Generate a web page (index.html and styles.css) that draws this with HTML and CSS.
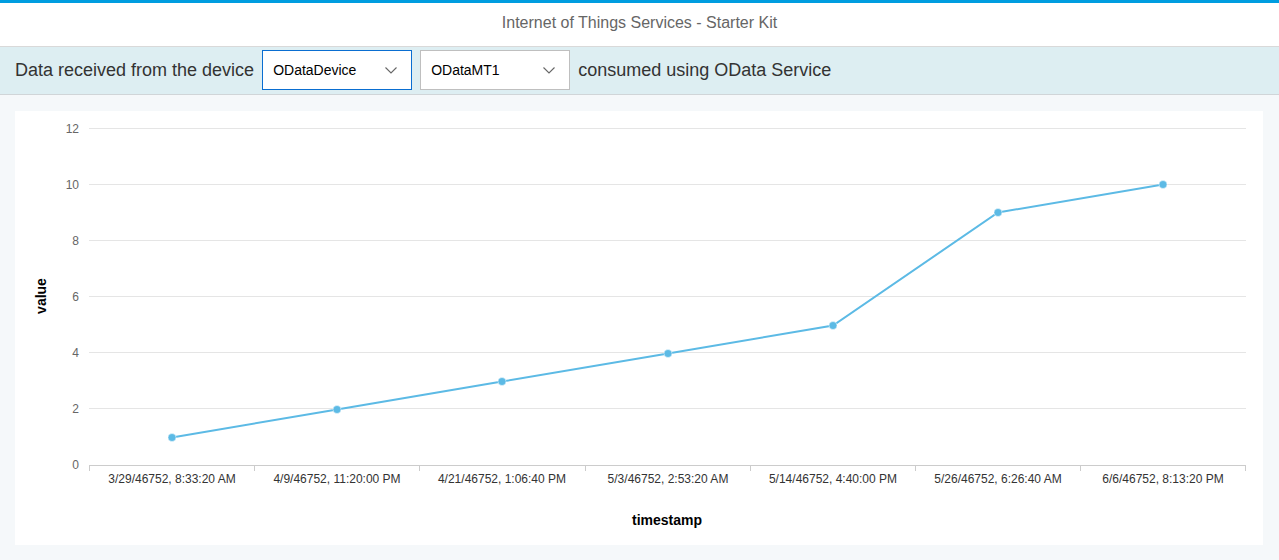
FILE: index.html
```html
<!DOCTYPE html>
<html>
<head>
<meta charset="utf-8">
<link rel="stylesheet" href="styles.css">
</head>
<body>
<div class="page">
  <header class="shell-header">
    <div class="title">Internet of Things Services - Starter Kit</div>
  </header>
  <div class="toolbar">
    <span class="label">Data received from the device</span>
    <div class="select select-active">
      <span class="select-text">ODataDevice</span>
      <svg class="chev" width="12" height="7" viewBox="0 0 12 7"><path d="M0.5 0.5 L6 6 L11.5 0.5" fill="none" stroke="#666" stroke-width="1.1"/></svg>
    </div>
    <div class="select">
      <span class="select-text">ODataMT1</span>
      <svg class="chev" width="12" height="7" viewBox="0 0 12 7"><path d="M0.5 0.5 L6 6 L11.5 0.5" fill="none" stroke="#666" stroke-width="1.1"/></svg>
    </div>
    <span class="label">consumed using OData Service</span>
  </div>
  <main class="content">
    <section class="card">
      <svg class="chart" width="1248" height="434" viewBox="0 0 1248 434">
        <g class="grid" stroke="#e5e5e5" stroke-width="1">
          <line x1="74" x2="1231" y1="17.5" y2="17.5"/>
          <line x1="74" x2="1231" y1="73.5" y2="73.5"/>
          <line x1="74" x2="1231" y1="129.5" y2="129.5"/>
          <line x1="74" x2="1231" y1="185.5" y2="185.5"/>
          <line x1="74" x2="1231" y1="241.5" y2="241.5"/>
          <line x1="74" x2="1231" y1="297.5" y2="297.5"/>
        </g>
        <g class="ylab" fill="#666" font-size="12" text-anchor="end">
          <text x="64" y="22">12</text>
          <text x="64" y="78">10</text>
          <text x="64" y="134">8</text>
          <text x="64" y="190">6</text>
          <text x="64" y="246">4</text>
          <text x="64" y="302">2</text>
          <text x="64" y="358">0</text>
        </g>
        <g stroke="#cccccc" stroke-width="1">
          <line x1="74" x2="1231" y1="354.5" y2="354.5"/>
          <line x1="74.5" x2="74.5" y1="354" y2="360"/>
          <line x1="239.5" x2="239.5" y1="354" y2="360"/>
          <line x1="404.5" x2="404.5" y1="354" y2="360"/>
          <line x1="570.5" x2="570.5" y1="354" y2="360"/>
          <line x1="735.5" x2="735.5" y1="354" y2="360"/>
          <line x1="900.5" x2="900.5" y1="354" y2="360"/>
          <line x1="1065.5" x2="1065.5" y1="354" y2="360"/>
          <line x1="1230.5" x2="1230.5" y1="354" y2="360"/>
        </g>
        <g class="xlab" fill="#333" font-size="12" text-anchor="middle">
          <text x="157" y="372">3/29/46752, 8:33:20 AM</text>
          <text x="322" y="372">4/9/46752, 11:20:00 PM</text>
          <text x="487" y="372">4/21/46752, 1:06:40 PM</text>
          <text x="653" y="372">5/3/46752, 2:53:20 AM</text>
          <text x="818" y="372">5/14/46752, 4:40:00 PM</text>
          <text x="983" y="372">5/26/46752, 6:26:40 AM</text>
          <text x="1148" y="372">6/6/46752, 8:13:20 PM</text>
        </g>
        <text class="axis-title" x="652" y="414" text-anchor="middle">timestamp</text>
        <text class="axis-title" x="0" y="0" text-anchor="middle" transform="translate(31 185) rotate(-90)">value</text>
        <polyline fill="none" stroke="#5cbae5" stroke-width="2" points="157,326.5 322,298.5 487,270.5 653,242.5 818,214.5 983,101.5 1148,73.5"/>
        <g fill="#5cbae5" stroke="#fff" stroke-width="0.5">
          <circle cx="157" cy="326.5" r="4"/>
          <circle cx="322" cy="298.5" r="4"/>
          <circle cx="487" cy="270.5" r="4"/>
          <circle cx="653" cy="242.5" r="4"/>
          <circle cx="818" cy="214.5" r="4"/>
          <circle cx="983" cy="101.5" r="4"/>
          <circle cx="1148" cy="73.5" r="4"/>
        </g>
      </svg>
    </section>
  </main>
</div>
</body>
</html>
```
FILE: styles.css
```css
html, body {
  margin: 0;
  padding: 0;
}
body {
  font-family: "Liberation Sans", Arial, sans-serif;
  background: #f5f8fa;
  width: 1279px;
  height: 560px;
  overflow: hidden;
}
.page {
  display: flex;
  flex-direction: column;
  height: 560px;
}
.shell-header {
  border-top: 3px solid #009de0;
  background: #ffffff;
  height: 43px;
  border-bottom: 1px solid #d9d9d9;
  display: flex;
  align-items: center;
  justify-content: center;
}
.title {
  font-size: 16px;
  color: #666666;
  margin-top: -4px;
}
.toolbar {
  background: #ddeef2;
  border-bottom: 1px solid #d0d5d8;
  display: flex;
  align-items: center;
  padding-left: 15px;
  gap: 8px;
  box-sizing: border-box;
  height: 48px;
}
.label {
  font-size: 18px;
  color: #333333;
  margin-top: -1px;
}
.select {
  width: 150px;
  height: 40px;
  box-sizing: border-box;
  background: #ffffff;
  border: 1px solid #bfbfbf;
  display: flex;
  align-items: center;
  justify-content: space-between;
  padding: 0 14px 0 10px;
  margin-top: -2px;
}
.select-active {
  border-color: #0a6ed1;
}
.select-text {
  font-size: 14px;
  color: #000000;
}
.chev {
  display: block;
  margin-top: 2px;
}
.content {
  flex: 1;
  padding: 16px 16px 15px 15px;
}
.card {
  background: #ffffff;
  width: 1248px;
  height: 434px;
}
.chart {
  display: block;
  font-family: "Liberation Sans", Arial, sans-serif;
}
.axis-title {
  font-size: 14px;
  font-weight: bold;
  fill: #000000;
}
```
